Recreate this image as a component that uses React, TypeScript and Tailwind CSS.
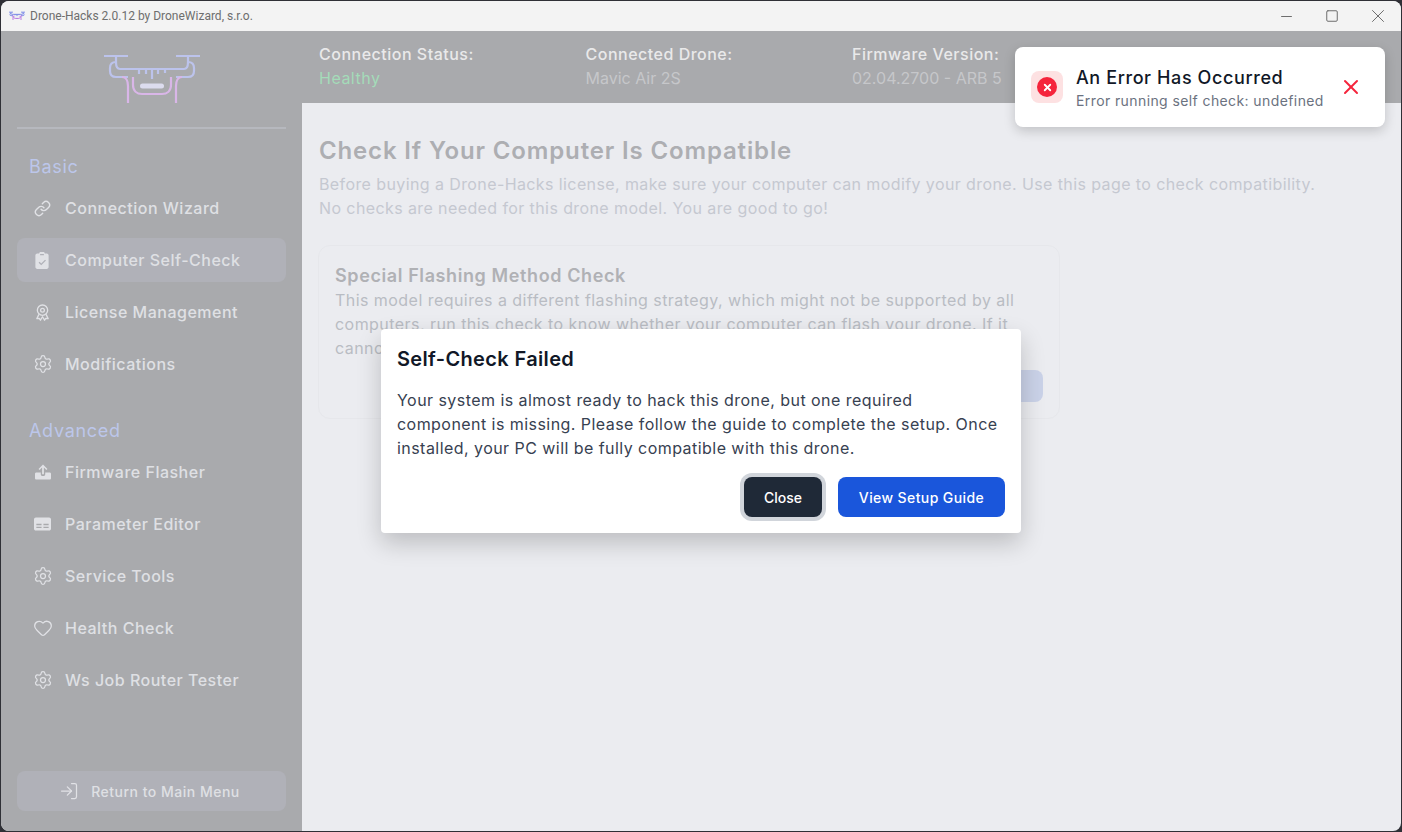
import React from 'react';
import { Link, Settings, Heart, LogIn, X, Minus, Square } from 'lucide-react';

const FONT = "font-['Inter','Liberation_Sans',sans-serif]";

// tone: pale version sits under the overlay, strong one is the title bar favicon
const DroneLogo = ({ className, top, bottom, sw }: { className: string; top: string; bottom: string; sw: number }) => (
  <svg viewBox="0 0 96 48" className={className} fill="none" strokeWidth={sw}>
    <path d="M0 1h24M72 1h24" stroke={top} />
    <path d="M12 1v6M84 1v6" stroke={top} />
    <path d="M12 7c-4 0-6 2-6 6v3c0 4 2 6 6 6h12M84 7c4 0 6 2 6 6v3c0 4-2 6-6 6H72" stroke={top} />
    <path d="M12 7c0 4 1 7 4 7h64c3 0 4-3 4-7" stroke={top} />
    <path d="M24 48V31c0-5-2-9-6-9M72 48V31c0-5 2-9 6-9" stroke={bottom} />
    <path d="M29 22v8c0 6 4 9 9 9h20c5 0 9-3 9-9v-8" stroke={bottom} />
    <path d="M35 14v5M42 14v5M48 14v10M54 14v5M61 14v4" stroke={top} />
    <rect x="36" y="28.500" width="24" height="5" rx="2.500" fill="#dcdcee" />
  </svg>
);

const ClipboardIcon = () => (
  <svg viewBox="1 0 14 18" className="w-[14px] h-[17px]" fill="#e1e2e6">
    <path fillRule="evenodd" d="M5 1.500C5 .7 5.700 0 6.500 0h3c.8 0 1.500.7 1.500 1.500H13c1.100 0 2 .9 2 2V16c0 1.100-.9 2-2 2H3c-1.100 0-2-.9-2-2V3.500c0-1.100.9-2 2-2h2Zm1 .5v1.500h4V2H6Zm-.6 8.300-1 1 2.800 2.800 5-5-1-1-4 4-1.800-1.800Z" />
  </svg>
);

const RosetteIcon = () => (
  <svg viewBox="0 0 16 18" className="w-[15px] h-[17px]" fill="none" stroke="#e1e2e6" strokeWidth="1.400">
    <circle cx="8" cy="6.500" r="5.500" />
    <circle cx="8" cy="6.500" r="2" />
    <path d="M4.200 11 2 15.500l2.500-.3 1.300 2L8 13.500l2.200 3.700 1.300-2 2.500.3-2.200-4.500" strokeLinejoin="round" />
  </svg>
);

const UploadIcon = () => (
  <svg viewBox="0 0 18 17" className="w-[16px] h-[16px]" fill="#e1e2e6">
    <path d="M9 0 4 5 5.200 6.200 8 3.400V11h2V3.400l2.800 2.800L14 5 9 0Z" />
    <path d="M0 10.500C0 9.700.7 9 1.500 9H6.500v2c0 1.100.9 2 2 2h1c1.100 0 2-.9 2-2V9h5c.8 0 1.500.7 1.500 1.500v5c0 .8-.7 1.500-1.500 1.500h-15C.7 17 0 16.300 0 15.500v-5Z" />
  </svg>
);

const TableIcon = () => (
  <svg viewBox="0 0 18 14" className="w-[17px] h-[14px] ml-[-1px]" fill="#e1e2e6">
    <path fillRule="evenodd" d="M2 0h14c1.100 0 2 .9 2 2v10c0 1.100-.9 2-2 2H2c-1.100 0-2-.9-2-2V2C0 .9.900 0 2 0Zm.500 6.800V8.300h5.500V6.800H2.500Zm7.500 0V8.300h5.500V6.800H10Zm-7.500 3V11.300h5.500V9.800H2.500Zm7.500 0V11.300h5.500V9.800H10Z" />
  </svg>
);

const gear = <Settings size={20} strokeWidth={1.5} className="text-[#e1e2e6] ml-[-2px]" />;

const basicItems = [
  { label: 'Connection Wizard', icon: <Link size={17} strokeWidth={2} className="text-[#e1e2e6] ml-[-1px]" /> },
  { label: 'Computer Self-Check', icon: <ClipboardIcon />, active: true },
  { label: 'License Management', icon: <RosetteIcon /> },
  { label: 'Modifications', icon: gear },
];

const advancedItems = [
  { label: 'Firmware Flasher', icon: <UploadIcon /> },
  { label: 'Parameter Editor', icon: <TableIcon /> },
  { label: 'Service Tools', icon: gear },
  { label: 'Health Check', icon: <Heart size={20} strokeWidth={1.5} className="text-[#e1e2e6] ml-[-2px]" /> },
  { label: 'Ws Job Router Tester', icon: gear },
];

const NavItem = ({ label, icon, active }: { label: string; icon: React.ReactNode; active?: boolean }) => (
  <div className={`flex items-center h-[44px] pl-[18px] rounded-lg ${active ? 'bg-[#b0b1b8]' : ''}`}>
    <span className="w-[30px] flex items-center">{icon}</span>
    <span className="text-[16px] font-medium tracking-[0.5px] text-[#dfe0e4]">{label}</span>
  </div>
);

const StatusColumn = ({ label, value, valueClass }: { label: string; value: string; valueClass: string }) => (
  <div className="w-[266.5px] shrink-0 whitespace-nowrap">
    <div className="text-[16px] leading-[24px] font-medium tracking-[0.5px] text-[#e9e9ea]">{label}</div>
    <div className={`text-[16px] leading-[24px] ${valueClass}`}>{value}</div>
  </div>
);

export default function App() {
  return (
    <div className={`h-[832px] w-[1402px] bg-[#2f3036] p-px overflow-hidden ${FONT}`}>
      <div className="relative h-full rounded-lg overflow-hidden flex flex-col bg-[#ebecf0]">
        {/* title bar */}
        <div className="h-[30px] shrink-0 bg-[#f3f3f3] flex items-center pl-[8px]">
          <DroneLogo className="w-[16px] h-[10px] mr-[5px]" top="#6f7fe6" bottom="#b066e0" sw={5} />
          <span className="font-['Roboto',sans-serif] text-[12px] text-[#6e6e6e]">Drone-Hacks 2.0.12 by DroneWizard, s.r.o.</span>
          <div className="ml-auto flex items-center text-[#6e6e6e]">
            <span className="w-[46px] flex justify-center"><Minus size={17} strokeWidth={1} absoluteStrokeWidth /></span>
            <span className="w-[46px] flex justify-center"><Square size={14} strokeWidth={1} absoluteStrokeWidth /></span>
            <span className="w-[46px] flex justify-center"><X size={22} strokeWidth={1} absoluteStrokeWidth /></span>
          </div>
        </div>

        <div className="flex-1 flex min-h-0">
          {/* sidebar */}
          <aside className="w-[301px] shrink-0 bg-[#a9aaad] flex flex-col px-[16px]">
            <div className="h-[98px] flex justify-center items-start pt-[24px] border-b-2 border-[#b6b8be]">
              <DroneLogo className="w-[96px] h-[48px]" top="#bcc3ec" bottom="#d9b6e8" sw={2.2} />
            </div>
            <div className="pt-[26px] pl-[12px] text-[18px] leading-[24px] tracking-[0.7px] text-[#bcc6ea]">Basic</div>
            <div className="mt-[7px] flex flex-col gap-[8px]">
              {basicItems.map((item) => (
                <NavItem key={item.label} {...item} />
              ))}
            </div>
            <div className="pt-[33px] pl-[12px] text-[18px] leading-[24px] tracking-[0.7px] text-[#bcc6ea]">Advanced</div>
            <div className="mt-[7px] flex flex-col gap-[8px]">
              {advancedItems.map((item) => (
                <NavItem key={item.label} {...item} />
              ))}
            </div>
            <div className="mt-auto mb-[20px] h-[40px] rounded-lg bg-[#b0b1b8] flex items-center justify-center gap-[12px] pr-[4px]">
              <LogIn size={20} strokeWidth={1.5} className="text-[#e1e2e6]" />
              <span className="text-[14px] font-medium tracking-[0.5px] text-[#dfe0e4]">Return to Main Menu</span>
            </div>
          </aside>

          {/* main */}
          <main className="flex-1 min-w-0 flex flex-col">
            <div className="h-[72px] shrink-0 bg-[#a9aaad] flex items-center pl-[17px] pb-[2px]">
              <StatusColumn label="Connection Status:" value="Healthy" valueClass="tracking-[0.5px] text-[#a4dcb9]" />
              <StatusColumn label="Connected Drone:" value="Mavic Air 2S" valueClass="text-[#c6c7ca]" />
              <StatusColumn label="Firmware Version:" value="02.04.2700 - ARB 5" valueClass="text-[#c6c7ca]" />
            </div>
            <div className="pt-[32px] pl-[16px]">
              <h1 className="pl-px text-[24px] leading-[32px] font-semibold tracking-[0.85px] text-[#adaeb2]">Check If Your Computer Is Compatible</h1>
              <p className="pl-px mt-[5px] text-[16px] leading-[24px] tracking-[0.4px] text-[#c5c8d0] whitespace-nowrap">
                Before buying a Drone-Hacks license, make sure your computer can modify your drone. Use this page to check compatibility.
                <br />
                No checks are needed for this drone model. You are good to go!
              </p>
              <div className="mt-[25px] w-[742px] h-[174px] rounded-xl border border-[#e6e7eb] px-[16px] pt-[18px] pb-[16px] flex flex-col">
                <h2 className="text-[18px] leading-[24px] font-semibold tracking-[0.6px] text-[#b0b1b5]">Special Flashing Method Check</h2>
                <p className="text-[16px] leading-[24px] tracking-[0.45px] text-[#b9bcc3]">
                  This model requires a different flashing strategy, which might not be supported by all computers, run this check to know whether your computer can flash your drone. If it cannot, you will need another PC.
                </p>
                <div className="mt-auto flex justify-end">
                  <div className="w-[160px] h-[32px] rounded-lg bg-[#cad2e8]" />
                </div>
              </div>
            </div>
          </main>
        </div>

        {/* toast */}
        <div className="absolute left-[1014px] top-[46px] w-[370px] h-[80px] rounded-lg bg-white shadow-[0_4px_12px_rgba(0,0,0,0.18)] flex items-center pl-[16px] pr-[22px]">
          <div className="w-[32px] h-[32px] rounded-lg bg-[#fde1e2] flex items-center justify-center shrink-0">
            <div className="w-[20px] h-[20px] rounded-full bg-[#f5243c] flex items-center justify-center">
              <X size={11} strokeWidth={4} className="text-white" />
            </div>
          </div>
          <div className="ml-[13px] flex-1 whitespace-nowrap pt-[2px]">
            <div className="text-[18px] leading-[26px] font-medium tracking-[0.6px] text-[#111827]">An Error Has Occurred</div>
            <div className="text-[14px] leading-[20px] tracking-[0.4px] text-[#6b7280]">Error running self check: undefined</div>
          </div>
          <X size={24} strokeWidth={2} className="text-[#f5243c] shrink-0" />
        </div>

        {/* modal */}
        <div className="absolute left-[380px] top-[328px] w-[640px] h-[204px] rounded bg-white shadow-[0_10px_25px_rgba(0,0,0,0.2)] px-[16px] pt-[16px]">
          <h3 className="text-[20px] leading-[28px] font-semibold tracking-[0.35px] text-[#111827]">Self-Check Failed</h3>
          <p className="mt-[15px] text-[16px] leading-[24px] tracking-[0.45px] text-[#374151]">
            Your system is almost ready to hack this drone, but one required component is missing. Please follow the guide to complete the setup. Once installed, your PC will be fully compatible with this drone.
          </p>
          <div className="mt-[17px] flex justify-end gap-[16px]">
            <button className="w-[78px] h-[40px] rounded-lg bg-[#1f2937] ring-4 ring-[#d1d5db] text-[14px] font-medium text-white">Close</button>
            <button className="w-[167px] h-[40px] rounded-lg bg-[#1a56db] text-[14px] font-medium tracking-[0.4px] text-white">View Setup Guide</button>
          </div>
        </div>
      </div>
    </div>
  );
}
